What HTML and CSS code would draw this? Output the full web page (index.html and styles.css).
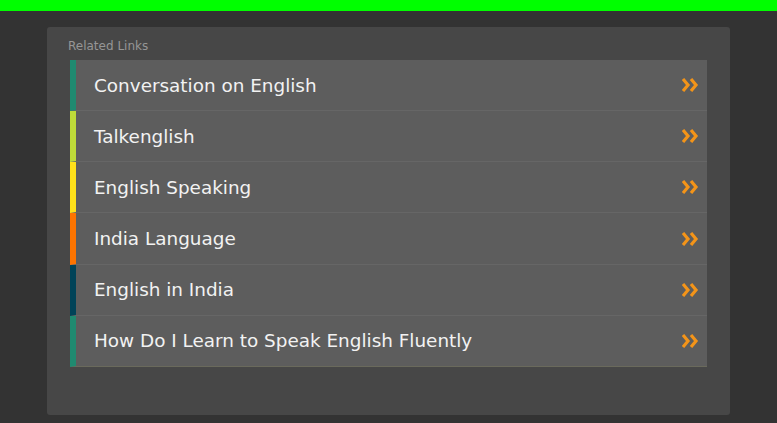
FILE: index.html
```html
<!DOCTYPE html>
<html lang="en">
<head>
    <meta charset="UTF-8">
    <meta name="viewport" content="width=device-width, initial-scale=1.0">
    <title>Related Links</title>
    <link rel="stylesheet" href="styles.css">
</head>
<body>
    <div class="topbar"></div>

    <div class="panel">
        <div class="panel-title">Related Links</div>
        <ul class="links">
            <li class="link c-teal"><a href="#">Conversation on English</a><span class="arrow"><svg width="18" height="16" viewBox="0 0 18 16"><path d="M1 2 L6 8 L1 14 M9 2 L14 8 L9 14" fill="none" stroke="#f39419" stroke-width="3.2"/></svg></span></li>
            <li class="link c-lime"><a href="#">Talkenglish</a><span class="arrow"><svg width="18" height="16" viewBox="0 0 18 16"><path d="M1 2 L6 8 L1 14 M9 2 L14 8 L9 14" fill="none" stroke="#f39419" stroke-width="3.2"/></svg></span></li>
            <li class="link c-yellow"><a href="#">English Speaking</a><span class="arrow"><svg width="18" height="16" viewBox="0 0 18 16"><path d="M1 2 L6 8 L1 14 M9 2 L14 8 L9 14" fill="none" stroke="#f39419" stroke-width="3.2"/></svg></span></li>
            <li class="link c-orange"><a href="#">India Language</a><span class="arrow"><svg width="18" height="16" viewBox="0 0 18 16"><path d="M1 2 L6 8 L1 14 M9 2 L14 8 L9 14" fill="none" stroke="#f39419" stroke-width="3.2"/></svg></span></li>
            <li class="link c-navy"><a href="#">English in India</a><span class="arrow"><svg width="18" height="16" viewBox="0 0 18 16"><path d="M1 2 L6 8 L1 14 M9 2 L14 8 L9 14" fill="none" stroke="#f39419" stroke-width="3.2"/></svg></span></li>
            <li class="link c-teal"><a href="#">How Do I Learn to Speak English Fluently</a><span class="arrow"><svg width="18" height="16" viewBox="0 0 18 16"><path d="M1 2 L6 8 L1 14 M9 2 L14 8 L9 14" fill="none" stroke="#f39419" stroke-width="3.2"/></svg></span></li>
        </ul>
    </div>
</body>
</html>
```

FILE: styles.css
```css
body {
    margin: 0;
    background-color: #333333;
    font-family: "DejaVu Sans", Verdana, sans-serif;
}

.topbar {
    height: 11px;
    background-color: #00ff00;
}

.panel {
    width: 642px;
    height: 377px;
    margin: 16px 0 0 47px;
    padding: 11px 21px 0 20px;
    background-color: #474747;
    border-radius: 3px;
}

.panel-title {
    color: #969696;
    font-size: 12px;
    height: 22px;
    line-height: 16px;
    padding-left: 1px;
}

.links {
    list-style: none;
    margin: 0 0 0 3px;
    padding: 0;
    width: 637px;
}

.link {
    display: flex;
    align-items: center;
    height: 50.17px;
    background-color: #5d5d5d;
    border-left: 6px solid #1f8a70;
    border-bottom: 1px solid #666666;
    padding: 0 7px 0 18px;
}

.link:last-child {
    border-bottom: 1px solid #6a6a5c;
}

.link a {
    flex: 1;
    color: #f2f2f2;
    text-decoration: none;
    font-size: 18.4px;
}

.arrow {
    display: flex;
}

.c-teal { border-left-color: #1f8a70; }
.c-lime { border-left-color: #bedb39; }
.c-yellow { border-left-color: #ffe11a; }
.c-orange { border-left-color: #fd7400; }
.c-navy { border-left-color: #004358; }
```
